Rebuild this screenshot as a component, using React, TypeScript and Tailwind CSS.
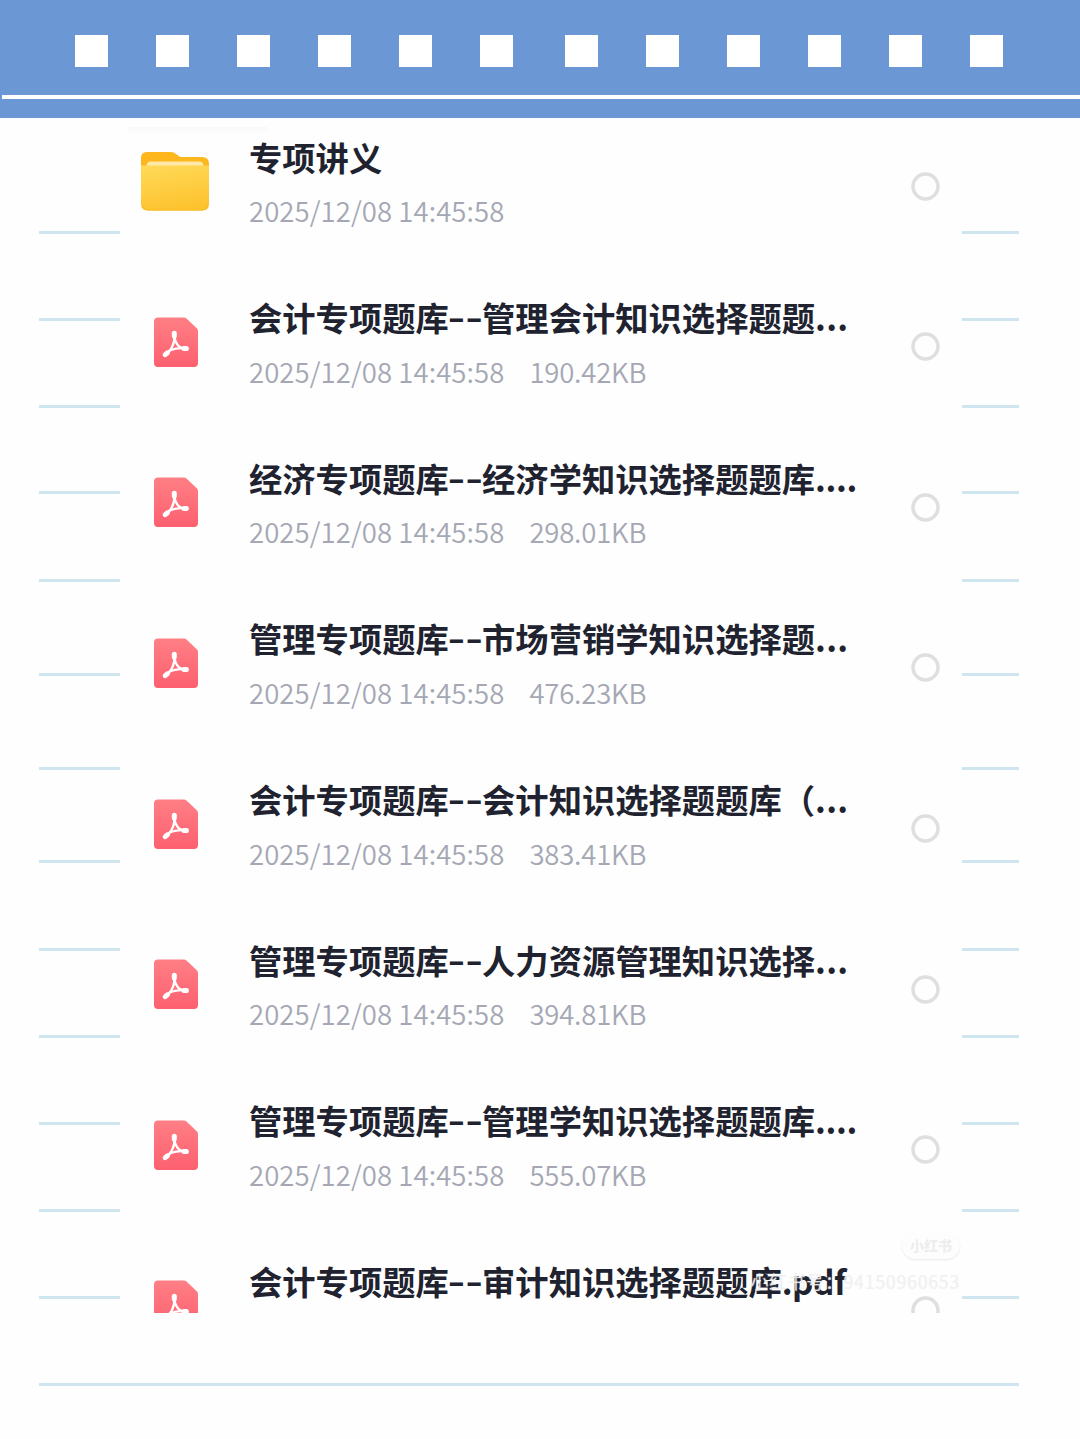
import { Fragment } from "react";

interface FileItem {
  name: string;
  suffix?: string;
  tail?: string;
  date: string;
  size?: string;
  folder?: boolean;
  tailClass?: string;
}

const DATE = "2025/12/08 14:45:58";

const files: FileItem[] = [
  { name: "专项讲义", date: DATE, folder: true },
  { name: "会计专项题库", suffix: "管理会计知识选择题题", tail: "...", date: DATE, size: "190.42KB" },
  {
    name: "经济专项题库",
    suffix: "经济学知识选择题题库",
    tail: "....",
    tailClass: "-tracking-[0.300px]",
    date: DATE,
    size: "298.01KB",
  },
  { name: "管理专项题库", suffix: "市场营销学知识选择题", tail: "...", date: DATE, size: "476.23KB" },
  { name: "会计专项题库", suffix: "会计知识选择题题库（", tail: "...", date: DATE, size: "383.41KB" },
  { name: "管理专项题库", suffix: "人力资源管理知识选择", tail: "...", date: DATE, size: "394.81KB" },
  {
    name: "管理专项题库",
    suffix: "管理学知识选择题题库",
    tail: "....",
    tailClass: "-tracking-[0.300px]",
    date: DATE,
    size: "555.07KB",
  },
  {
    name: "会计专项题库",
    suffix: "审计知识选择题题库",
    tail: ".pdf",
    tailClass: "-tracking-[0.5px]",
    date: "",
  },
];

const holes = [0, 1, 2, 3, 4, 5];

// Distance from each ruled line to the one above it
const ruleGaps = [
  "h-[116px]",
  "h-[87px]",
  "h-[87px]",
  "h-[86px]",
  "h-[88px]",
  "h-[94px]",
  "h-[94px]",
  "h-[93px]",
  "h-[88px]",
  "h-[87px]",
  "h-[87px]",
  "h-[87px]",
  "h-[87px]",
];

function FolderIcon() {
  return (
    <svg width="68" height="60" viewBox="0 0 68 60" fill="none">
      <defs>
        <linearGradient id="folder" x1="20" y1="12" x2="28" y2="60" gradientUnits="userSpaceOnUse">
          <stop stopColor="#ffd957" />
          <stop offset="1" stopColor="#fdc32f" />
        </linearGradient>
      </defs>
      <path d="M0 20V7Q0 1 6 1H30Q33 1 35 3L37 4.500Q38.500 6 41 6H61Q68 6 68 13V20Z" fill="#fdb71d" />
      <path d="M5.500 18V15Q5.500 10.500 10 10.500H58Q62.500 10.500 62.500 15V18Z" fill="#ffe9a8" />
      <path d="M0 14.500H68V53Q68 59.500 61.500 59.500H6.500Q0 59.500 0 53Z" fill="url(#folder)" />
      <path d="M1 55Q3 59 7 59H61Q65 59 67 55" stroke="#f8b91f" strokeWidth="1" />
    </svg>
  );
}

function PdfIcon() {
  return (
    <svg className="ml-px" width="44" height="50" viewBox="0 0 44 50" fill="none">
      <defs>
        <linearGradient id="pdf" x1="22" y1="0" x2="22" y2="50" gradientUnits="userSpaceOnUse">
          <stop stopColor="#ff7f85" />
          <stop offset="1" stopColor="#fd6070" />
        </linearGradient>
      </defs>
      <path d="M4 .5H30Q31.500 .5 32.500 1.500L43 11.500Q44 12.500 44 14V46Q44 50 40 50H4Q0 50 0 46V4.500Q0 .5 4 .5Z" fill="url(#pdf)" />
      <g stroke="#fff" strokeLinecap="round" strokeLinejoin="round">
        <path d="M20.300 17Q20.500 25 25 29.500Q28 32 32.500 31.500" strokeWidth="2.300" />
        <path d="M20.300 17Q21 25 17.500 31Q15 35 11 38" strokeWidth="2.300" />
        <path d="M15 34Q21 30.500 32 31.200" strokeWidth="2.300" />
        <path d="M20.300 16.300V19" strokeWidth="5" />
        <path d="M30 31.600L32.400 31.400" strokeWidth="5" />
        <path d="M11.200 37.600L13.500 35.800" strokeWidth="5" />
      </g>
    </svg>
  );
}

function RuledMargin({ side }: { side: "left" | "right" }) {
  return (
    <div className={side === "left" ? "w-[81px] ml-[39px]" : "w-[57px] ml-[2px]"}>
      {ruleGaps.map((gap, i) => (
        <div key={i} className={`${gap} border-b-[3px] border-[#cfe6f1]`} />
      ))}
    </div>
  );
}

function FileRow({ file }: { file: FileItem }) {
  return (
    <div className="flex h-[160.65px] shrink-0 items-start pl-[21px]">
      <div className="flex h-[127px] w-[68px] shrink-0 items-center justify-center">
        {file.folder ? <FolderIcon /> : <PdfIcon />}
      </div>
      <div className="ml-10 w-[662px] pt-[19px] whitespace-nowrap">
        <div className="flex h-10 items-center text-[33.3px] leading-10 font-bold text-[#20232f]">
          <span>{file.name}</span>
          {file.suffix && (
            <Fragment>
              <span className="w-[33.3px]">
                <span className="inline-block origin-left -translate-x-[1.500px] -translate-y-px scale-x-[1.44]">
                  --
                </span>
              </span>
              <span>{file.suffix}</span>
              <span className={file.tailClass ?? "tracking-[0.300px]"}>{file.tail}</span>
            </Fragment>
          )}
        </div>
        <div className="mt-[13.500px] flex h-10 items-center gap-[25px] text-[27.5px] leading-10 font-[350] tracking-[0.080px] text-[#a5a8b4]">
          <span>{file.date}</span>
          {file.size && <span className="-tracking-[0.200px]">{file.size}</span>}
        </div>
      </div>
      <div className="flex h-[137px] items-center">
        <svg width="29" height="29" viewBox="0 0 29 29" fill="none">
          <circle cx="14.5" cy="14.5" r="12.500" stroke="#dfdfe2" strokeWidth="3.500" />
        </svg>
      </div>
    </div>
  );
}

export default function App() {
  return (
    <div className="relative h-[1439px] w-[1080px] overflow-hidden bg-[#fefefe] font-['Noto_Sans_CJK_SC',sans-serif]">
      <header className="h-[117.500px] bg-[#6b97d5] pt-[34.500px]">
        <div className="flex gap-[52.500px] pl-[75px]">
          {[0, 1].map((group) => (
            <div key={group} className="flex gap-[48.500px]">
              {holes.map((hole) => (
                <div key={hole} className="size-[32.500px] bg-white" />
              ))}
            </div>
          ))}
        </div>
        <div className="mt-[27.500px] ml-[2px] h-[4px] bg-white" />
      </header>

      <main className="flex h-[1195px]">
        <RuledMargin side="left" />
        <div className="flex w-[840px] flex-col overflow-hidden">
          {files.map((file, i) => (
            <FileRow key={i} file={file} />
          ))}
        </div>
        <RuledMargin side="right" />
      </main>
      <div className="mt-[70px] ml-[39px] h-[3px] w-[980px] bg-[#cfe6f1]" />

      <div className="absolute top-[127px] left-[128px] h-2 w-[140px] bg-linear-to-b from-[#f9f9f9] to-[#fefefe]" />

      {/* Watermark */}
      <div className="absolute top-[1232px] left-[902px] flex h-[27px] w-[58px] items-center justify-center rounded-full bg-[#fdfdfd] text-[14px] font-bold text-[#ececec] shadow-[0_1px_2px_#e8e8e8]">
        小红书
      </div>
      <div className="absolute top-[1268px] right-[120px] text-[18px] leading-[26px] tracking-[0.600px] whitespace-nowrap text-[#f1f1f1]/50 [text-shadow:0_0_1px_#eeeeee]">
        小红书号：94150960653
      </div>
    </div>
  );
}
